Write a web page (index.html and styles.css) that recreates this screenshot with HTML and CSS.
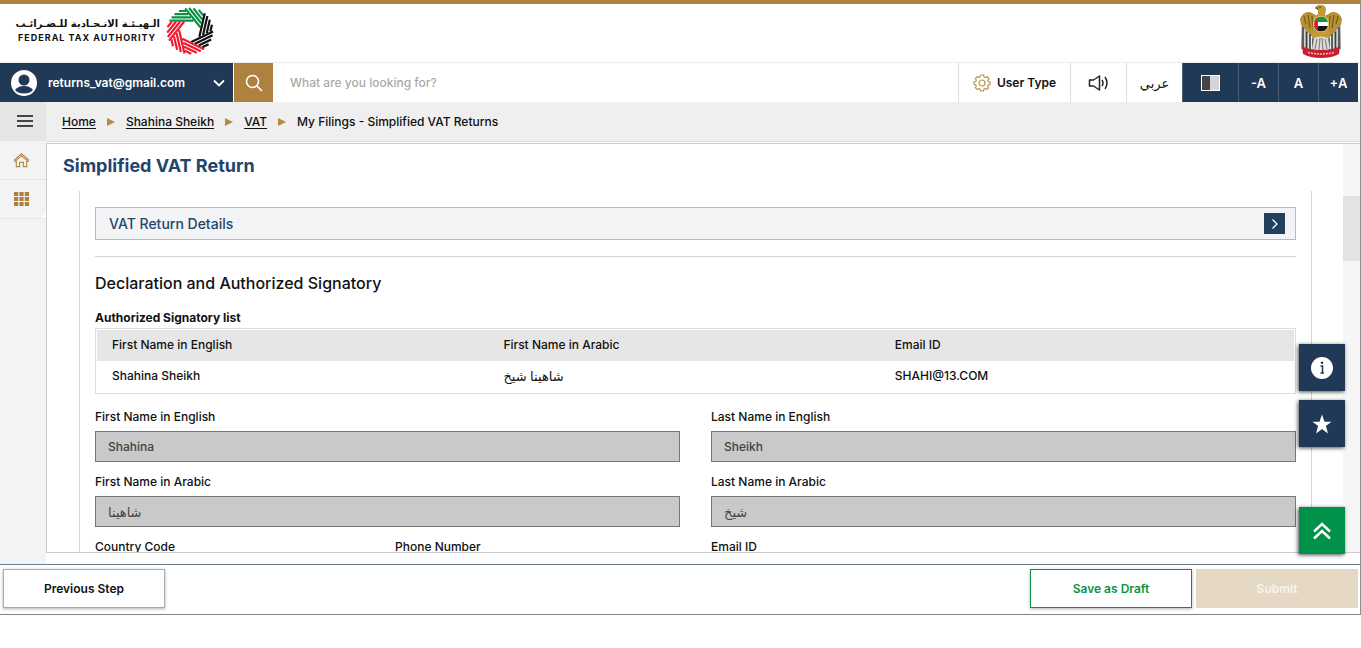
FILE: index.html
```html
<!DOCTYPE html>
<html lang="en">
<head>
    <meta charset="UTF-8">
    <meta name="viewport" content="width=device-width, initial-scale=1.0">
    <title>Simplified VAT Return</title>
    <link rel="stylesheet" href="styles.css">
</head>
<body>
<div class="app">

    <header class="header">
        <div class="logo">
            <div class="logo-text">
                <span class="logo-ar" lang="ar" dir="rtl">الـهيـئـة الاتـحـادية للـضـرائـب</span>
                <span class="logo-en">FEDERAL TAX AUTHORITY</span>
            </div>
            <svg class="logo-mark" viewBox="0 0 48 48" fill="none" stroke-width="2.2">
                <defs>
                    <path id="bars" d="M13 4H20M8.500 7.200H22.500M5.500 10.400H25M3.400 13.600H27.500"/>
                </defs>
                <g stroke="#0a9347">
                    <use href="#bars"/>
                    <use href="#bars" transform="rotate(51.4 24 24)"/>
                </g>
                <g stroke="#111">
                    <use href="#bars" transform="rotate(102.9 24 24)"/>
                    <use href="#bars" transform="rotate(154.3 24 24)"/>
                </g>
                <g stroke="#ee1c2e">
                    <use href="#bars" transform="rotate(205.7 24 24)"/>
                    <use href="#bars" transform="rotate(257.1 24 24)"/>
                    <use href="#bars" transform="rotate(308.6 24 24)"/>
                </g>
            </svg>
        </div>
        <svg class="emblem" viewBox="0 0 42 54">
            <!-- wings -->
            <path d="M2 12Q8 6 15 11L17 30 13 46 1 45Z" fill="#8e8e8e"/>
            <path d="M40 12Q34 6 27 11L25 30 29 46 41 45Z" fill="#8e8e8e"/>
            <path d="M0 15Q3 7 10 8L17 12V28L13 34 10 29 7 28 5 23 1 21Z" fill="#b5912f"/>
            <path d="M42 15Q39 7 32 8L25 12V28L29 34 32 29 35 28 37 23 41 21Z" fill="#b5912f"/>
            <path d="M3 23V44M6.500 28V46M10 30V46M13 35V46M39 23V44M35.500 28V46M32 30V46M29 35V46" stroke="#3c3c3c" stroke-width="1.2"/>
            <path d="M4.800 25V44M8.300 29V45M11.500 32V45M37.200 25V44M33.700 29V45M30.500 32V45" stroke="#eee" stroke-width="1"/>
            <path d="M4 12L6 20M8 11L10 24M12 12L13 28M38 12L36 20M34 11L32 24M30 12L29 28" stroke="#69501a" stroke-width="1"/>
            <!-- body and head -->
            <path d="M15 4Q17 0 21 1Q26 1 26 6L25 11 29 14 30 32 25 37H17L12 32 13 14 18 10 18 6Z" fill="#c29b35"/>
            <path d="M15 4L18 3 18 6Z" fill="#555"/>
            <circle cx="20" cy="3.500" r=".7" fill="#222"/>
            <path d="M14 34Q21 31 28 34L30 45Q21 49 12 45Z" fill="#d9d9d9"/>
            <path d="M17 35L15 45M20 34L19 46M22 34L23 46M25 35L27 45" stroke="#777" stroke-width="1"/>
            <!-- flag -->
            <circle cx="21" cy="20" r="8" fill="#e6cf8d"/>
            <path d="M14.200 18A7 7 0 0 1 27.800 18Z" fill="#159447"/>
            <path d="M14.200 18H27.800V22H14.200Z" fill="#fff"/>
            <path d="M14.200 22H27.800A7 7 0 0 1 14.200 22Z" fill="#151515"/>
            <path d="M18 13.700V26.300A7 7 0 0 1 18 13.700Z" fill="#e2202c"/>
            <!-- banner -->
            <path d="M2 42Q8 46 21 46T40 42L39 50Q32 54 21 54T3 50Z" fill="#c9202f"/>
            <path d="M8 48.500Q21 51.500 34 48.500" stroke="#f3b9bd" stroke-width="1.500" stroke-dasharray="2 1" fill="none"/>
        </svg>
    </header>

    <nav class="toolbar">
        <button type="button" class="user-menu">
            <svg class="avatar" viewBox="0 0 28 28">
                <circle cx="14" cy="14" r="13" fill="#fff"/>
                <circle cx="14" cy="11" r="5.500" fill="#1f3956"/>
                <path d="M5 21Q8 17 14 17T23 21Q20 24.500 14 24.500T5 21Z" fill="#1f3956"/>
            </svg>
            <span class="user-name">returns_vat@gmail.com</span>
            <svg class="chevron" viewBox="0 0 12 8" fill="none" stroke="#fff" stroke-width="1.800"><path d="M1 1.500L6 6.500 11 1.500"/></svg>
        </button>
        <button type="button" class="search-btn" aria-label="Search">
            <svg viewBox="0 0 18 18" fill="none" stroke="#fff" stroke-width="1.600"><circle cx="7.500" cy="7.500" r="6"/><path d="M12 12L17 17"/></svg>
        </button>
        <input type="text" class="search-box" placeholder="What are you looking for?" aria-label="Search text">
        <button type="button" class="tool user-type">
            <svg viewBox="0 0 18 18" fill="none" stroke="#ba9454" stroke-width="1.200" stroke-linejoin="round">
                <path d="M7.500 1H10.500L11 3 12.500 3.700 14.300 2.600 15.900 4.700 14.700 6.300 15.200 7.700 17 8V10.500L15.200 10.800 14.600 12.200 15.600 13.800 13.700 15.600 12.100 14.600 10.800 15.200 10.400 17H7.600L7.200 15.200 5.800 14.600 4.200 15.600 2.300 13.700 3.300 12.100 2.800 10.800 1 10.400V7.900L2.800 7.500 3.400 6 2.300 4.400 4.300 2.500 5.800 3.600 7.100 3Z"/>
                <circle cx="9" cy="9" r="3"/>
            </svg>
            User Type
        </button>
        <button type="button" class="tool sound" aria-label="Listen">
            <svg viewBox="0 0 22 16" fill="none" stroke="#222" stroke-width="1.500" stroke-linejoin="round"><path d="M1.500 5H5.500L11.500 1V15L5.500 11H1.500ZM14 5Q16 8 14 11M17 2Q21 8 17 14"/></svg>
        </button>
        <button type="button" class="tool arabic" lang="ar">عربي</button>
        <button type="button" class="tool dark contrast" aria-label="Contrast"><span class="swatch"></span></button>
        <button type="button" class="tool dark size">-A</button>
        <button type="button" class="tool dark size">A</button>
        <button type="button" class="tool dark size">+A</button>
    </nav>

    <div class="body">
        <aside class="sidebar">
            <button type="button" class="side-btn menu" aria-label="Menu"><span class="burger"></span></button>
            <a href="#" class="side-btn" aria-label="Home">
                <svg viewBox="0 0 18 16" fill="none" stroke="#b68a45" stroke-width="1.200"><path d="M1 8.500L9 1.500 17 8.500M1.500 10L9 3.700 16.500 10M3.500 9V15H7V10.500H11V15H14.500V9"/></svg>
            </a>
            <a href="#" class="side-btn apps" aria-label="Services">
                <svg viewBox="0 0 16 16" fill="#b17f3b"><path d="M.500 1h4.200v4h-4.200zM5.900 1h4.200v4h-4.200zM11.300 1h4.200v4h-4.200zM.500 6h4.200v4h-4.200zM5.900 6h4.200v4h-4.200zM11.300 6h4.200v4h-4.200zM.500 11h4.200v4h-4.200zM5.900 11h4.200v4h-4.200zM11.300 11h4.200v4h-4.200z"/></svg>
            </a>
        </aside>

        <main class="main">
            <div class="breadcrumb">
                <a href="#">Home</a><i class="arrow"></i>
                <a href="#">Shahina Sheikh</a><i class="arrow"></i>
                <a href="#">VAT</a><i class="arrow"></i>
                <span>My Filings - Simplified VAT Returns</span>
            </div>

            <div class="panel">
                <div class="panel-content">
                    <h1>Simplified VAT Return</h1>
                    <form class="form-area">
                        <div class="section-bar">
                            <span>VAT Return Details</span>
                            <button type="button" class="expand" aria-label="Expand">
                                <svg viewBox="0 0 8 12" fill="none" stroke="#fff" stroke-width="1.300"><path d="M1.500 1.500L6 6 1.500 10.500"/></svg>
                            </button>
                        </div>
                        <hr>
                        <h2>Declaration and Authorized Signatory</h2>
                        <h3>Authorized Signatory list</h3>
                        <table class="signatory">
                            <thead>
                                <tr><th>First Name in English</th><th>First Name in Arabic</th><th>Email ID</th></tr>
                            </thead>
                            <tbody>
                                <tr><td>Shahina Sheikh</td><td class="ar" lang="ar">شاهينا شيخ</td><td>SHAHI@13.COM</td></tr>
                            </tbody>
                        </table>
                        <div class="fields">
                            <div class="field">
                                <label for="first-en">First Name in English</label>
                                <input type="text" id="first-en" value="Shahina" readonly>
                            </div>
                            <div class="field">
                                <label for="last-en">Last Name in English</label>
                                <input type="text" id="last-en" value="Sheikh" readonly>
                            </div>
                            <div class="field">
                                <label for="first-ar">First Name in Arabic</label>
                                <input type="text" class="ar" id="first-ar" value="شاهينا" lang="ar" readonly>
                            </div>
                            <div class="field">
                                <label for="last-ar">Last Name in Arabic</label>
                                <input type="text" class="ar" id="last-ar" value="شيخ" lang="ar" readonly>
                            </div>
                            <div class="field-pair">
                                <div class="field">
                                    <label for="country">Country Code</label>
                                    <input type="text" id="country" readonly>
                                </div>
                                <div class="field">
                                    <label for="phone">Phone Number</label>
                                    <input type="text" id="phone" readonly>
                                </div>
                            </div>
                            <div class="field">
                                <label for="email">Email ID</label>
                                <input type="text" id="email" readonly>
                            </div>
                        </div>
                    </form>
                </div>
                <div class="scroll-track"><div class="scroll-thumb"></div></div>
            </div>
        </main>
    </div>

    <footer class="actions">
        <button type="button" class="btn previous">Previous Step</button>
        <button type="button" class="btn draft">Save as Draft</button>
        <button type="button" class="btn submit" disabled>Submit</button>
    </footer>

    <div class="floating">
        <button type="button" class="float-btn" aria-label="Information">
            <svg viewBox="0 0 24 24"><circle cx="12" cy="12" r="11" fill="#fff"/><circle cx="12" cy="6.800" r="1.300" fill="#1f3956"/><path d="M10.500 10H12.500V17M10.500 17H14" stroke="#1f3956" stroke-width="1.500" fill="none"/></svg>
        </button>
        <button type="button" class="float-btn" aria-label="Favourite">
            <svg viewBox="0 0 24 24"><path d="M12 2.500L14.500 9.700H21.500L15.900 14.100 18 21.500 12 17.100 6 21.500 8.100 14.100 2.500 9.700H9.500Z" fill="#fff"/></svg>
        </button>
        <button type="button" class="float-btn to-top" aria-label="Back to top">
            <svg viewBox="0 0 24 24" fill="none" stroke="#fff" stroke-width="2.400"><path d="M4 12.500L12 5 20 12.500M4 19.500L12 12 20 19.500"/></svg>
        </button>
    </div>
</div>
</body>
</html>
```
FILE: styles.css
```css
* {
    box-sizing: border-box;
}

body {
    margin: 0;
    background-color: #fff;
    color: #111;
    font-family: Inter, "DejaVu Sans", sans-serif;
    font-size: 12px;
    font-weight: 500;
}

button, input {
    font: inherit;
    color: inherit;
    border: none;
    border-radius: 0;
    padding: 0;
    background: none;
}

button {
    cursor: pointer;
}

svg {
    display: block;
}

.app {
    position: relative;
    display: flex;
    flex-direction: column;
    height: calc(100vh - 33px);
    min-height: 480px;
    border-top: 4px solid #ae823e;
    border-right: 1px solid #8c8f92;
    border-bottom: 1px solid #7d8387;
}

/* header */
.header {
    display: flex;
    justify-content: space-between;
    align-items: center;
    height: 59px;
    flex-shrink: 0;
    padding: 0 18px 4px 18px;
    border-bottom: 1px solid #ececec;
}

.logo {
    display: flex;
    align-items: center;
    gap: 6px;
}

.logo-text {
    display: flex;
    flex-direction: column;
    width: 142px;
    line-height: 14px;
    white-space: nowrap;
}

.logo-ar {
    font-family: "DejaVu Sans", sans-serif;
    font-size: 10px;
    font-weight: bold;
}

.logo-en {
    font-size: 9px;
    font-weight: 700;
    letter-spacing: 1px;
}

.logo-mark {
    width: 48px;
    height: 48px;
}

.emblem {
    width: 42px;
    height: 54px;
}

/* toolbar */
.toolbar {
    display: flex;
    height: 39px;
    flex-shrink: 0;
    padding-right: 2px;
}

.user-menu {
    display: flex;
    align-items: center;
    width: 233px;
    padding: 0 8px 0 10px;
    background-color: #1f3956;
    color: #fff;
    font-weight: 600;
}

.avatar {
    width: 28px;
    height: 28px;
    margin-right: 10px;
}

.user-name {
    flex: 1;
    text-align: left;
}

.chevron {
    width: 12px;
    height: 8px;
}

.search-btn {
    display: flex;
    align-items: center;
    justify-content: center;
    width: 39px;
    margin-left: 1px;
    background-color: #ae823e;
}

.search-btn svg {
    width: 18px;
    height: 18px;
}

.search-box {
    flex: 1;
    min-width: 0;
    padding: 0 17px;
}

.search-box::placeholder {
    color: #aaa;
    opacity: 1;
}

.tool {
    display: flex;
    align-items: center;
    justify-content: center;
    border-left: 1px solid #ddd;
}

.user-type {
    width: 112px;
    gap: 6px;
    font-weight: 600;
}

.user-type svg {
    width: 18px;
    height: 18px;
}

.sound {
    width: 56px;
}

.sound svg {
    width: 22px;
    height: 16px;
}

.arabic {
    width: 56px;
    font-size: 13px;
}

.dark {
    background-color: #1f3956;
    border-left-color: #4a5d74;
    color: #fff;
    font-size: 13px;
    font-weight: 600;
}

.contrast {
    width: 56px;
}

.size {
    width: 40px;
}

.swatch {
    width: 19px;
    height: 16px;
    border: 1px solid #fff;
    background: linear-gradient(to right, #444 50%, #d5d5d5 50%);
}

/* sidebar */
.body {
    display: flex;
    flex: 1;
    min-height: 0;
}

.sidebar {
    width: 46px;
    flex-shrink: 0;
    background-color: #f2f3f5;
}

.side-btn {
    display: flex;
    align-items: center;
    justify-content: center;
    width: 100%;
    height: 39px;
    padding-right: 3px;
    border-bottom: 1px solid #e3e5e7;
}

.side-btn svg {
    width: 17px;
    height: 16px;
}

.menu {
    padding: 0 0 0 4px;
    background-color: #e6e6e6;
}

.burger {
    width: 16px;
    height: 12px;
    border-top: 2px solid #444;
    border-bottom: 2px solid #444;
    background: linear-gradient(#444, #444) center / 100% 2px no-repeat;
}

.apps {
    background: linear-gradient(135deg, transparent 50%, #fff 50%) right bottom / 5px 5px no-repeat;
}

/* breadcrumb */
.main {
    display: flex;
    flex-direction: column;
    flex: 1;
    min-width: 0;
    padding-bottom: 11px;
}

.breadcrumb {
    display: flex;
    align-items: center;
    height: 40px;
    flex-shrink: 0;
    padding-left: 16px;
    margin-bottom: 1px;
    background-color: #efefef;
    border-bottom: 1px solid #ddd;
}

.breadcrumb a {
    color: #111;
    text-underline-offset: 2px;
}

.arrow {
    margin: 0 11px;
    border-left: 8px solid #b68a45;
    border-top: 4px solid transparent;
    border-bottom: 4px solid transparent;
}

/* content panel */
.panel {
    display: flex;
    flex: 1;
    min-height: 0;
    border: 1px solid #ccc;
    border-right: none;
}

.panel-content {
    display: flex;
    flex-direction: column;
    flex: 1;
    min-width: 0;
    padding: 0 31px 0 32px;
}

h1 {
    margin: 0 0 0 -16px;
    height: 47px;
    flex-shrink: 0;
    font-size: 18px;
    font-weight: 700;
    line-height: 44px;
    color: #24456a;
}

.form-area {
    flex: 1;
    min-height: 0;
    overflow: hidden;
    padding: 16px 15px 0;
    border-left: 1px solid #d5d5d5;
    border-right: 1px solid #d5d5d5;
}

.section-bar {
    display: flex;
    align-items: center;
    justify-content: space-between;
    height: 33px;
    padding: 0 10px 0 13px;
    background-color: #f3f4f6;
    border: 1px solid #bbb;
    color: #24456a;
    font-size: 14px;
}

.expand {
    display: flex;
    align-items: center;
    justify-content: center;
    width: 21px;
    height: 21px;
    background-color: #23415f;
}

.expand svg {
    width: 8px;
    height: 12px;
}

hr {
    margin: 16px 0;
    border: none;
    border-top: 1px solid #d5d5d5;
}

h2 {
    margin: 0 0 16px;
    font-size: 16px;
    font-weight: 500;
    line-height: 20px;
}

h3 {
    margin: 0 0 1px;
    font-size: 12px;
    font-weight: 700;
    line-height: 18px;
}

.signatory {
    width: 100%;
    table-layout: fixed;
    border-spacing: 0;
    padding: 1px;
    border: 1px solid #ddd;
}

.signatory th, .signatory td {
    height: 31px;
    padding: 0 15px 2px;
    font-weight: 500;
    text-align: left;
}

.signatory th {
    background-color: #e6e6e6;
}

.signatory th:nth-child(-n+2) {
    width: 32.7%;
}

.signatory .ar, .field .ar {
    font-size: 13px;
}

/* form fields */
.fields {
    display: grid;
    grid-template-columns: 1fr 1fr;
    gap: 10px 31px;
    margin-top: 13px;
}

.field-pair {
    display: grid;
    grid-template-columns: 1fr 1fr;
    gap: 15px;
}

.field label {
    display: block;
    line-height: 20px;
    margin-bottom: 4px;
}

.field input {
    width: 100%;
    height: 31px;
    padding: 0 12px;
    background-color: #c9c9c9;
    border: 1px solid #777;
    color: #444;
}

/* bottom actions */
.actions {
    display: flex;
    gap: 4px;
    height: 50px;
    flex-shrink: 0;
    padding: 4px 2px 6px 3px;
    border-top: 1px solid #6c7b88;
}

.btn {
    width: 162px;
    background-color: #fff;
    font-weight: 600;
    box-shadow: 0 1px 3px rgba(0, 0, 0, 0.3);
}

.previous {
    border: 1px solid #aaa;
    margin-right: auto;
}

.draft {
    border: 1px solid #0a9347;
    color: #0a9347;
}

.submit {
    background-color: #e5d8c4;
    color: #f8f4ee;
    box-shadow: none;
}

/* floating shortcuts */
.floating {
    position: absolute;
    right: 15px;
    bottom: 60px;
    display: flex;
    flex-direction: column;
    gap: 9px;
}

.float-btn {
    display: flex;
    align-items: center;
    justify-content: center;
    width: 46px;
    height: 47px;
    background-color: #1f3956;
    box-shadow: -1px 1px 4px rgba(0, 0, 0, 0.7);
}

.float-btn svg {
    width: 24px;
    height: 24px;
}

.to-top {
    margin-top: 51px;
    background-color: #00924b;
}

.scroll-track {
    width: 17px;
    padding-top: 52px;
    background-color: #f6f6f6;
}

.scroll-thumb {
    height: 65px;
    background-color: #e3e3e3;
}
```
